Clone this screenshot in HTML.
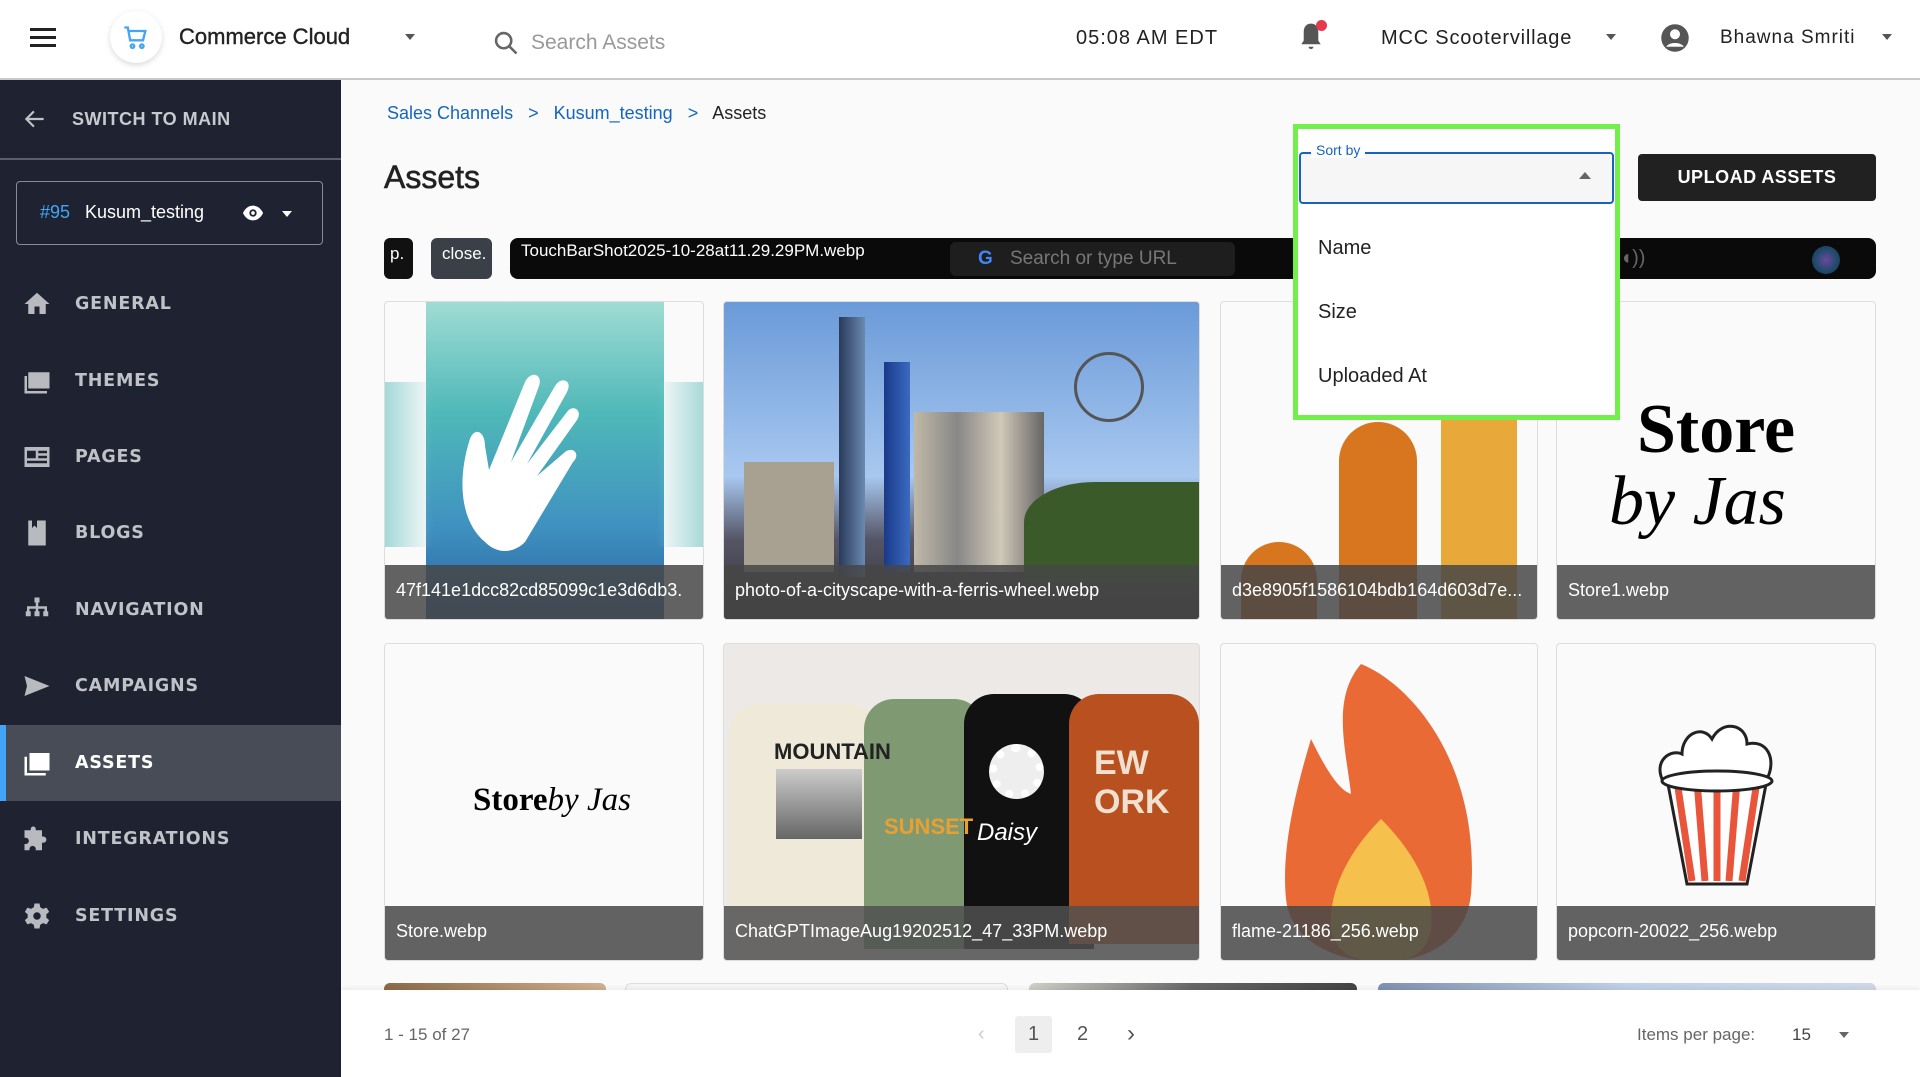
<!DOCTYPE html>
<html><head><meta charset="utf-8"><style>
*{box-sizing:border-box;margin:0;padding:0}
body{width:1920px;height:1077px;overflow:hidden;background:#fafafa;font-family:"Liberation Sans",sans-serif;position:relative}
.abs{position:absolute}
.hdr{left:0;top:0;width:1920px;height:80px;background:#fff;border-bottom:2px solid #c8c8c8}
.side{left:0;top:80px;width:341px;height:997px;background:#1f2331}
.nav{position:absolute;left:0;width:341px;height:76px;display:flex;align-items:center;color:#c0c2c7;font-family:"DejaVu Sans",sans-serif;font-weight:bold;font-size:17.5px;letter-spacing:.8px}
.nav svg{position:absolute;left:22px;width:30px;height:30px;fill:#b8bac0}
.nav span{position:absolute;left:75px}
.card{position:absolute;border:1px solid #ddd;border-radius:4px;overflow:hidden;background:#fafafa}
.cap{position:absolute;left:0;right:0;bottom:0;height:54px;background:rgba(70,70,70,.85);color:#fff;font-size:18px;padding:15px 0 0 11px;white-space:nowrap;overflow:hidden}
</style></head><body>
<div class="abs hdr">
  <div class="abs" style="left:30px;top:28px;width:26px;height:3px;background:#222;box-shadow:0 8px 0 #222,0 16px 0 #222"></div>
  <div class="abs" style="left:110px;top:11px;width:52px;height:52px;border-radius:50%;background:#fff;box-shadow:0 2px 6px rgba(0,0,0,.15)"></div>
  <svg class="abs" style="left:122px;top:24px" width="28" height="28" viewBox="0 0 24 24" fill="none" stroke="#42a5f5" stroke-width="2"><path d="M2 3h3l2 11h11l2-8H6"/><circle cx="9" cy="19" r="1.5"/><circle cx="17" cy="19" r="1.5"/></svg>
  <div class="abs" style="left:179px;top:24px;font-size:22px;color:#222;-webkit-text-stroke:.4px #222">Commerce Cloud</div>
  <div class="abs" style="left:405px;top:34px;border:5px solid transparent;border-top:6px solid #555"></div>
  <svg class="abs" style="left:492px;top:29px" width="28" height="28" viewBox="0 0 24 24" fill="none" stroke="#666" stroke-width="2.2"><circle cx="10" cy="10" r="6.5"/><path d="M15 15l6 6"/></svg>
  <div class="abs" style="left:531px;top:31px;font-size:21px;color:#999">Search Assets</div>
  <div class="abs" style="left:1076px;top:27px;font-size:20px;color:#222;letter-spacing:1px">05:08 AM EDT</div>
  <svg class="abs" style="left:1296px;top:20px" width="30" height="34" viewBox="0 0 24 28" fill="#555"><path d="M12 3c-4 0-6 3-6 7v7l-2 3h16l-2-3v-7c0-4-2-7-6-7zM10 22h4a2 2 0 0 1-4 0z"/></svg>
  <div class="abs" style="left:1316px;top:20px;width:11px;height:11px;border-radius:50%;background:#e53950"></div>
  <div class="abs" style="left:1381px;top:27px;font-size:20px;color:#222;letter-spacing:.8px">MCC Scootervillage</div>
  <div class="abs" style="left:1606px;top:34px;border:5px solid transparent;border-top:6px solid #555"></div>
  <svg class="abs" style="left:1660px;top:23px" width="30" height="30" viewBox="0 0 24 24"><circle cx="12" cy="12" r="11" fill="#555"/><circle cx="12" cy="9" r="4" fill="#fff"/><path d="M5 19c2-4 12-4 14 0" fill="#fff"/></svg>
  <div class="abs" style="left:1720px;top:27px;font-size:19px;color:#222;letter-spacing:1px">Bhawna Smriti</div>
  <div class="abs" style="left:1882px;top:34px;border:5px solid transparent;border-top:6px solid #555"></div>
</div>
<div class="abs side">
  <svg class="abs" style="left:22px;top:26px" width="26" height="26" viewBox="0 0 24 24" fill="none" stroke="#c0c2c7" stroke-width="2"><path d="M20 12H5M11 5l-7 7 7 7"/></svg>
  <div class="abs" style="left:72px;top:29px;color:#c8cad0;font-size:18px;font-weight:bold;letter-spacing:.5px">SWITCH TO MAIN</div>
  <div class="abs" style="left:0;top:78px;width:341px;height:2px;background:#5a5e68"></div>
  <div class="abs" style="left:16px;top:101px;width:307px;height:64px;border:1.5px solid #888c95;border-radius:4px"></div>
  <div class="abs" style="left:40px;top:122px;font-size:18px;color:#42a5f5">#95</div>
  <div class="abs" style="left:85px;top:122px;font-size:18px;color:#fff">Kusum_testing</div>
  <svg class="abs" style="left:241px;top:122px" width="24" height="22" viewBox="0 0 24 24"><path d="M1 12C4 6 8 4 12 4s8 2 11 8c-3 6-7 8-11 8S4 18 1 12z" fill="#fff"/><circle cx="12" cy="12" r="4" fill="#1f2331"/><circle cx="12" cy="12" r="2" fill="#fff"/></svg>
  <div class="abs" style="left:282px;top:131px;border:5px solid transparent;border-top:6px solid #fff"></div>
  <div class="nav" style="top:186px"><svg viewBox="0 0 24 24"><path d="M12 3L2 12h3v8h5v-6h4v6h5v-8h3z"/></svg><span>GENERAL</span></div>
  <div class="nav" style="top:263px"><svg viewBox="0 0 24 24"><path d="M5 5h17v13H5zM7 15l4-5 3 3 2-2 4 4zM2 8h2v12h16v2H2z"/></svg><span>THEMES</span></div>
  <div class="nav" style="top:339px"><svg viewBox="0 0 24 24"><path d="M2 4h20v16H2zM4 7v6h7V7zm9 0v2h7V7zm0 4v2h7v-2zM4 15v2h16v-2z"/></svg><span>PAGES</span></div>
  <div class="nav" style="top:415px"><svg viewBox="0 0 24 24"><path d="M5 2h3v6l2-2 2 2V2h7v20H5z"/></svg><span>BLOGS</span></div>
  <div class="nav" style="top:492px"><svg viewBox="0 0 24 24"><path d="M10 2h4v4h-1v3h7v4h1v4h-4v-4h1v-2h-5v2h1v4h-4v-4h1v-2H6v2h1v4H3v-4h1v-4h7V6h-1z"/></svg><span>NAVIGATION</span></div>
  <div class="nav" style="top:568px"><svg viewBox="0 0 24 24"><path d="M2 4l20 8-20 8 2-8zm2.5 8"/></svg><span>CAMPAIGNS</span></div>
  <div class="nav" style="top:645px;background:#484c56;color:#fff"><div style="position:absolute;left:0;top:0;width:6px;height:76px;background:#42a5f5"></div><svg viewBox="0 0 24 24" style="fill:#fff"><path d="M6 4h16v14H6zM8 15l4-5 3 3 2-2 3 4zM2 7h2v13h15v2H2z"/></svg><span>ASSETS</span></div>
  <div class="nav" style="top:721px"><svg viewBox="0 0 24 24"><path d="M9 2a2 2 0 0 1 2 2v1h5v5h1a2.5 2.5 0 0 1 0 5h-1v6h-5v-1a2.5 2.5 0 0 0-5 0v1H2v-5h1a2.5 2.5 0 0 0 0-5H2V5h5V4a2 2 0 0 1 2-2z"/></svg><span>INTEGRATIONS</span></div>
  <div class="nav" style="top:798px"><svg viewBox="0 0 24 24"><path d="M10 2h4l.6 3 2.2 1.3 2.9-1 2 3.4-2.3 2a7 7 0 0 1 0 2.6l2.3 2-2 3.4-2.9-1-2.2 1.3-.6 3h-4l-.6-3-2.2-1.3-2.9 1-2-3.4 2.3-2a7 7 0 0 1 0-2.6l-2.3-2 2-3.4 2.9 1L9.4 5zM12 9a3 3 0 1 0 0 6 3 3 0 0 0 0-6z"/></svg><span>SETTINGS</span></div>
</div>

<div class="abs" style="left:387px;top:103px;font-size:18px;color:#1565c0">Sales Channels <span style="margin:0 10px">&gt;</span> Kusum_testing <span style="margin:0 10px">&gt;</span> <span style="color:#222">Assets</span></div>
<div class="abs" style="left:384px;top:159px;font-size:32px;color:#222;-webkit-text-stroke:.6px #222">Assets</div>
<div class="abs" style="left:1638px;top:154px;width:238px;height:47px;background:#212121;border-radius:4px;color:#fff;font-weight:bold;font-size:18px;letter-spacing:.5px;text-align:center;line-height:47px">UPLOAD ASSETS</div>

<!-- strip -->
<div class="abs" style="left:384px;top:238px;width:29px;height:41px;background:#111;border-radius:6px;color:#fff;font-size:17px;padding:6px 0 0 6px">p.</div>
<div class="abs" style="left:431px;top:238px;width:61px;height:41px;background:#3a3f48;border-radius:6px;color:#fff;font-size:17px;padding:6px 0 0 11px">close.</div>
<div class="abs" style="left:510px;top:238px;width:1366px;height:41px;background:#0a0a0a;border-radius:8px"></div>
<div class="abs" style="left:950px;top:242px;width:285px;height:34px;background:#1e1e1e;border-radius:6px;color:#777;font-size:19px;padding:6px 0 0 60px">Search or type URL</div>
<div class="abs" style="left:978px;top:248px;color:#4285f4;font-weight:bold;font-size:19px">G</div>
<div class="abs" style="left:521px;top:241px;color:#fff;font-size:17px">TouchBarShot2025-10-28at11.29.29PM.webp</div>
<div class="abs" style="left:1620px;top:247px;color:#666;font-size:20px">◖))</div>
<div class="abs" style="left:1812px;top:246px;width:28px;height:28px;border-radius:50%;background:radial-gradient(circle,#6a4a9a,#1b4a6a 60%,#333)"></div>

<!-- row1 -->
<div class="card" style="left:384px;top:301px;width:320px;height:319px;background:#fafafa">
  <div class="abs" style="left:41px;top:0;width:238px;height:319px;background:linear-gradient(#9fdcd3,#4fb8b8 35%,#3f92c0 70%,#2a5fa0)"></div>
  <div class="abs" style="left:0;top:80px;width:320px;height:165px;background:linear-gradient(90deg,#8fd0d0,transparent 15%,transparent 85%,#8fd0d0);opacity:.8"></div>
  <svg class="abs" style="left:60px;top:60px" width="200" height="200" viewBox="0 0 100 100"><path d="M20 90c-12-10-14-30-8-50 2-8 8-6 8 2l2 12 18-44c3-6 9-4 7 2l-14 38 22-38c3-5 9-3 6 3l-20 36 20-26c3-4 8-1 5 4l-20 28 14-12c4-3 8 1 4 5L40 90c-6 6-14 6-20 0z" fill="#fff"/></svg>
  <div class="cap">47f141e1dcc82cd85099c1e3d6db3.</div>
</div>
<div class="card" style="left:723px;top:301px;width:477px;height:319px;background:linear-gradient(#6a9ad8,#a8c8f0 55%,#556 75%,#333)">
  <div class="abs" style="left:115px;top:15px;width:26px;height:260px;background:linear-gradient(90deg,#2a3a5a,#6a8ab0)"></div>
  <div class="abs" style="left:160px;top:60px;width:26px;height:210px;background:linear-gradient(90deg,#1a3a8a,#3a6ac0)"></div>
  <div class="abs" style="left:20px;top:160px;width:90px;height:110px;background:#a8a090"></div>
  <div class="abs" style="left:190px;top:110px;width:130px;height:160px;background:linear-gradient(90deg,#c0b8a8,#888,#d0c8b8,#666)"></div>
  <div class="abs" style="left:350px;top:50px;width:70px;height:70px;border:3px solid #555;border-radius:50%"></div>
  <div class="abs" style="left:300px;top:180px;width:177px;height:100px;background:#3a5a2a;border-radius:40% 0 0 0"></div>
  <div class="cap">photo-of-a-cityscape-with-a-ferris-wheel.webp</div>
</div>
<div class="card" style="left:1220px;top:301px;width:318px;height:319px">
  <div class="abs" style="left:118px;top:120px;width:78px;height:220px;border-radius:39px 39px 0 0;background:#d7761e"></div>
  <div class="abs" style="left:220px;top:100px;width:76px;height:240px;background:#e8a93a"></div>
  <div class="abs" style="left:20px;top:240px;width:76px;height:100px;border-radius:38px 38px 0 0;background:#d7761e"></div>
  <div class="cap">d3e8905f1586104bdb164d603d7e...</div>
</div>
<div class="card" style="left:1556px;top:301px;width:320px;height:319px">
  <div class="abs" style="left:80px;top:88px;font-family:'Liberation Serif',serif;font-weight:bold;font-size:70px;color:#000">Store</div>
  <div class="abs" style="left:52px;top:160px;font-family:'Liberation Serif',serif;font-style:italic;font-size:70px;color:#000">by Jas</div>
  <div class="cap">Store1.webp</div>
</div>

<!-- row2 -->
<div class="card" style="left:384px;top:643px;width:320px;height:318px">
  <div class="abs" style="left:88px;top:138px;font-family:'Liberation Serif',serif;font-size:33px;color:#000"><b>Store</b><i>by Jas</i></div>
  <div class="cap">Store.webp</div>
</div>
<div class="card" style="left:723px;top:643px;width:477px;height:318px;background:#ece9e6">
  <div class="abs" style="left:5px;top:60px;width:150px;height:250px;background:#efe9da;border-radius:30px 30px 0 0"></div>
  <div class="abs" style="left:140px;top:55px;width:120px;height:250px;background:#7f9a72;border-radius:30px 30px 0 0"></div>
  <div class="abs" style="left:240px;top:50px;width:130px;height:255px;background:#111;border-radius:30px 30px 0 0"></div>
  <div class="abs" style="left:345px;top:50px;width:130px;height:250px;background:#b8501f;border-radius:30px 30px 0 0"></div>
  <div class="abs" style="left:50px;top:95px;font-weight:bold;font-size:22px;color:#222">MOUNTAIN</div>
  <div class="abs" style="left:52px;top:125px;width:86px;height:70px;background:linear-gradient(#ccc,#666)"></div>
  <div class="abs" style="left:160px;top:170px;font-weight:bold;font-size:22px;color:#e8a030">SUNSET</div>
  <div class="abs" style="left:265px;top:100px;width:55px;height:55px;border-radius:50%;background:#eee;border:8px dotted #fff"></div>
  <div class="abs" style="left:253px;top:175px;font-style:italic;font-size:24px;color:#fff">Daisy</div>
  <div class="abs" style="left:370px;top:100px;font-weight:bold;font-size:34px;color:#f0e0d0">EW<br>ORK</div>
  <div class="cap" style="background:rgba(80,80,80,.85)">ChatGPTImageAug19202512_47_33PM.webp</div>
</div>
<div class="card" style="left:1220px;top:643px;width:318px;height:318px">
  <svg class="abs" style="left:40px;top:15px" width="240" height="303" viewBox="0 0 240 303"><path d="M100 5c50 20 120 100 110 230-5 50-50 68-90 68S30 285 25 240C20 190 35 130 50 80c10 20 25 50 40 55C85 90 70 40 100 5z" fill="#ea6a35"/><path d="M120 160c30 30 55 70 50 110-5 30-30 33-50 33s-45-5-50-33c-3-40 20-80 50-110z" fill="#f6c04d"/></svg>
  <div class="cap">flame-21186_256.webp</div>
</div>
<div class="card" style="left:1556px;top:643px;width:320px;height:318px">
  <svg class="abs" style="left:90px;top:65px" width="140" height="180" viewBox="0 0 140 180"><path d="M20 70l20 105h60l20-105z" fill="#fff" stroke="#222" stroke-width="3"/><path d="M30 72l15 100M50 72l8 100M70 72v100M90 72l-8 100M110 72l-15 100" stroke="#e8553a" stroke-width="7"/><path d="M15 70c-8-20 10-30 20-25 0-20 20-30 30-15 10-20 35-15 35 5 20-5 30 15 20 35z" fill="#fff" stroke="#222" stroke-width="3"/><ellipse cx="70" cy="72" rx="55" ry="10" fill="#fff" stroke="#222" stroke-width="3"/></svg>
  <div class="cap">popcorn-20022_256.webp</div>
</div>

<!-- row3 partial -->
<div class="abs" style="left:384px;top:983px;width:222px;height:10px;border-radius:6px 6px 0 0;background:linear-gradient(90deg,#8a6a48,#d0b090)"></div>
<div class="abs" style="left:625px;top:983px;width:383px;height:10px;border-radius:6px 6px 0 0;background:#f5f5f5;border:1px solid #ddd"></div>
<div class="abs" style="left:1029px;top:983px;width:328px;height:10px;border-radius:6px 6px 0 0;background:linear-gradient(90deg,#d0d0c8,#666,#444)"></div>
<div class="abs" style="left:1378px;top:983px;width:498px;height:10px;border-radius:6px 6px 0 0;background:linear-gradient(90deg,#8090b0,#c0d0e8,#d0d8e8)"></div>

<!-- footer -->
<div class="abs" style="left:341px;top:990px;width:1579px;height:87px;background:#fff;box-shadow:0 -2px 4px rgba(0,0,0,.06)"></div>
<div class="abs" style="left:384px;top:1025px;font-size:17px;color:#666">1 - 15 of 27</div>
<div class="abs" style="left:978px;top:1023px;font-size:20px;color:#ccc">&lsaquo;</div>
<div class="abs" style="left:1015px;top:1016px;width:37px;height:37px;background:#eee;border-radius:3px;text-align:center;line-height:37px;font-size:20px;color:#555">1</div>
<div class="abs" style="left:1077px;top:1023px;font-size:20px;color:#555">2</div>
<div class="abs" style="left:1127px;top:1020px;font-size:24px;color:#555">&rsaquo;</div>
<div class="abs" style="left:1637px;top:1025px;font-size:17px;color:#666">Items per page:</div>
<div class="abs" style="left:1792px;top:1025px;font-size:17px;color:#444">15</div>
<div class="abs" style="left:1839px;top:1032px;border:5px solid transparent;border-top:6px solid #666"></div>

<!-- dropdown -->
<div class="abs" style="left:1293px;top:124px;width:327px;height:296px;border:5px solid #72ef4a;background:#fff"></div>
<div class="abs" style="left:1299px;top:152px;width:315px;height:52px;border:2px solid #1565c0;border-radius:4px;background:#f6f6f6"></div>
<div class="abs" style="left:1311px;top:142px;padding:0 5px;background:#fff;font-size:14px;color:#1565c0">Sort by</div>
<div class="abs" style="left:1579px;top:172px;border:6px solid transparent;border-bottom:7px solid #666;border-top:0"></div>
<div class="abs" style="left:1318px;top:237px;font-size:20px;color:#222">Name</div>
<div class="abs" style="left:1318px;top:301px;font-size:20px;color:#222">Size</div>
<div class="abs" style="left:1318px;top:365px;font-size:20px;color:#222">Uploaded At</div>
</body></html>
